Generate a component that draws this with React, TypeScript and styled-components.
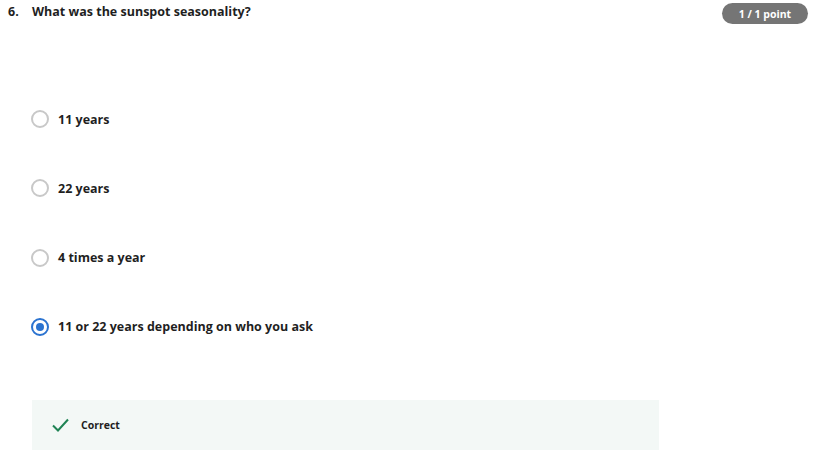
import React from "react";
import styled, { createGlobalStyle } from "styled-components";

const Global = createGlobalStyle`
  html, body { margin: 0; padding: 0; background: #ffffff; }
  body { font-family: "Open Sans", "Noto Sans", sans-serif; color: #1f1f1f; }
`;

const Page = styled.div`
  padding: 0 6px 0 8px;
  width: 814px;
  box-sizing: border-box;
`;

const Header = styled.div`
  display: flex;
  align-items: flex-start;
  height: 24px;
`;

const Number = styled.div`
  width: 24px;
  font-size: 12.5px;
  font-weight: 700;
  line-height: 24px;
`;

const Title = styled.div`
  flex: 1;
  font-size: 12.5px;
  font-weight: 700;
  line-height: 24px;
`;

const Badge = styled.div`
  margin-top: 3px;
  height: 21px;
  width: 86px;
  border-radius: 11px;
  background: #757575;
  color: #ffffff;
  font-size: 10.5px;
  font-weight: 700;
  display: flex;
  align-items: center;
  justify-content: center;
`;

const Options = styled.div`
  margin-top: 83px;
  padding-left: 23px;
  display: flex;
  flex-direction: column;
  gap: 45.3px;
`;

const Option = styled.label`
  display: flex;
  align-items: center;
  height: 24px;
  gap: 9px;
  font-size: 12.5px;
  font-weight: 700;
`;

const Radio = styled.span<{ $checked?: boolean }>`
  box-sizing: border-box;
  width: 18px;
  height: 18px;
  border-radius: 50%;
  border: ${(p) => (p.$checked ? "2px solid #2b73d0" : "2px solid #c8c8c8")};
  display: flex;
  align-items: center;
  justify-content: center;
  &::after {
    content: "";
    display: ${(p) => (p.$checked ? "block" : "none")};
    width: 8px;
    height: 8px;
    border-radius: 50%;
    background: #2b73d0;
  }
`;

const Feedback = styled.div`
  margin-top: 61px;
  margin-left: 24px;
  width: 627px;
  height: 50px;
  background: #f3f8f6;
  display: flex;
  align-items: center;
  padding-left: 20px;
  box-sizing: border-box;
  gap: 12px;
  font-size: 10.5px;
  font-weight: 700;
`;

const options = [
  { label: "11 years", checked: false },
  { label: "22 years", checked: false },
  { label: "4 times a year", checked: false },
  { label: "11 or 22 years depending on who you ask", checked: true },
];

export default function App() {
  return (
    <>
      <Global />
      <Page>
        <Header>
          <Number>6.</Number>
          <Title>What was the sunspot seasonality?</Title>
          <Badge>1 / 1 point</Badge>
        </Header>
        <Options>
          {options.map((o) => (
            <Option key={o.label}>
              <Radio $checked={o.checked} />
              {o.label}
            </Option>
          ))}
        </Options>
        <Feedback>
          <svg width="17" height="14" viewBox="0 0 17 14" fill="none">
            <path d="M1 7.5 L6 12.5 L16 1.5" stroke="#1f8354" strokeWidth="2" />
          </svg>
          Correct
        </Feedback>
      </Page>
    </>
  );
}
